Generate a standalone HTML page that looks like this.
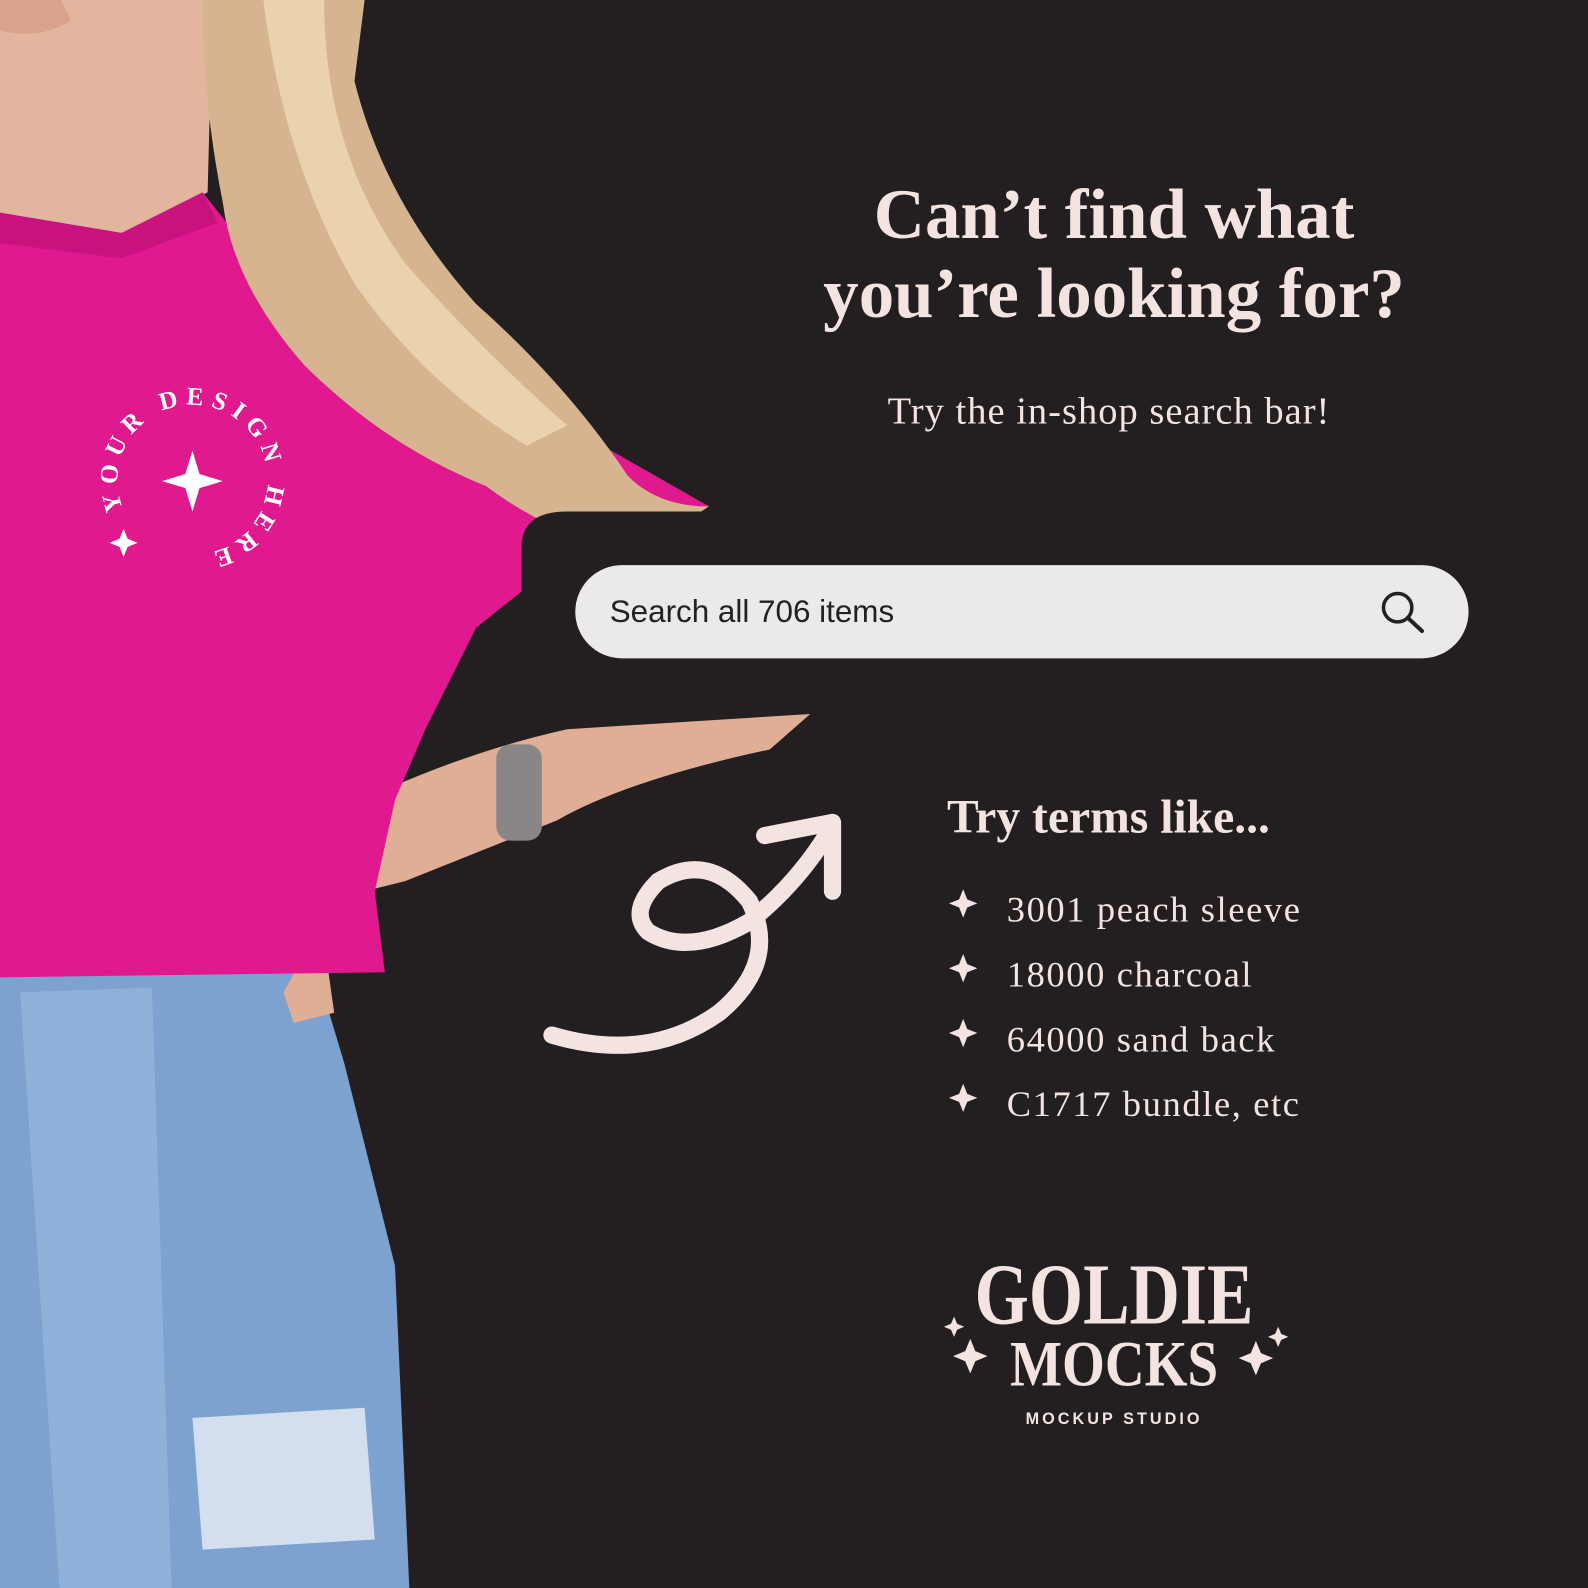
<!DOCTYPE html>
<html><head><meta charset="utf-8"><style>
body{margin:0;width:1588px;height:1588px;overflow:hidden;background:#231f20;position:relative;font-family:"Liberation Serif",serif;color:#f3e4e1}
#w{position:absolute;left:0;top:0;width:1568px;height:1568px;transform:scale(1.0128);transform-origin:0 0}
.t{position:absolute;text-align:center;white-space:nowrap}
</style></head><body><div id="w">
<svg width="1568" height="1568" style="position:absolute;left:0;top:0">
<path d="M0 0H210L205 190L120 230L0 210Z" fill="#e3b49e"/>
<path d="M0 0H60L70 20Q40 40 0 30Z" fill="#d9a28c"/>
<path d="M0 955L310 950L340 1050L390 1250L405 1588H0Z" fill="#7ea2d0"/>
<path d="M20 980L150 975L170 1588H60Z" fill="#9bbbe0" opacity=".6"/>
<path d="M190 1400L360 1390L370 1520L200 1530Z" fill="#e8eef5" opacity=".8"/>
<path d="M380 780Q470 740 560 720L800 705L760 740Q620 770 550 810L400 870L360 880Z" fill="#e0ad95"/>
<path d="M280 980Q300 940 320 930L330 1000L290 1010Z" fill="#e0ad95"/>
<path d="M0 210L120 230L200 190L280 290L560 420L700 500L520 580L470 620L420 720L390 790L370 880L380 960L0 965Z" fill="#e0198f"/>
<path d="M0 210L120 230L200 190L215 220L120 255L0 240Z" fill="#c8137e"/>
<path d="M200 0H360L350 80Q380 200 470 300Q560 380 620 470Q650 500 700 500L640 540Q560 540 480 480Q380 440 300 360Q230 280 220 200Q200 100 200 0Z" fill="#d6b48f"/>
<path d="M260 0H320Q320 150 400 260Q480 350 560 420L520 440Q420 380 350 280Q280 160 260 0Z" fill="#ead2ae"/>
<rect x="490" y="735" width="45" height="95" rx="14" fill="#8a8688"/>
<path d="M515 540Q515 505 560 505H1588V700H600Q515 700 515 650Z" fill="#231f20"/>
<rect x="568" y="558" width="882" height="92" rx="46" fill="#ebe9ea"/>
<circle cx="1380" cy="600" r="14" fill="none" stroke="#222" stroke-width="3.5"/>
<line x1="1390" y1="610" x2="1404" y2="623" stroke="#222" stroke-width="4" stroke-linecap="round"/>
<path d="M545 1022Q640 1050 710 1000Q770 950 740 890Q700 840 650 870Q620 900 640 920Q680 945 740 910Q790 870 822 815" fill="none" stroke="#f3e4e1" stroke-width="17" stroke-linecap="round"/>
<path d="M755 825L822 812L822 880" fill="none" stroke="#f3e4e1" stroke-width="17" stroke-linecap="round" stroke-linejoin="round"/>
<path d="M190 445L197 468L220 475L197 482L190 505L183 482L160 475L183 468Z" fill="#fff"/>
<path d="M122 522L126 532L136 536L126 540L122 550L118 540L108 536L118 532Z" fill="#fff"/>
<defs><path id="c" d="M122 503A74 74 0 1 1 258 503A74 74 0 0 1 122 503"/></defs>
<text font-family="Liberation Serif" font-weight="bold" font-size="25" fill="#fff" letter-spacing="7"><textPath href="#c">YOUR DESIGN HERE</textPath></text>
<g fill="#f3e4e1">
<path d="M951 878l4 10l10 4l-10 4l-4 10l-4-10l-10-4l10-4z"/>
<path d="M951 942l4 10l10 4l-10 4l-4 10l-4-10l-10-4l10-4z"/>
<path d="M951 1006l4 10l10 4l-10 4l-4 10l-4-10l-10-4l10-4z"/>
<path d="M951 1070l4 10l10 4l-10 4l-4 10l-4-10l-10-4l10-4z"/>
<path d="M958 1322l5 12l12 5l-12 5l-5 12l-5-12l-12-5l12-5z"/>
<path d="M1240 1324l5 12l12 5l-12 5l-5 12l-5-12l-12-5l12-5z"/>
<path d="M942 1300l3 7l7 3l-7 3l-3 7l-3-7l-7-3l7-3z"/>
<path d="M1262 1310l3 7l7 3l-7 3l-3 7l-3-7l-7-3l7-3z"/>
</g>
</svg>
<div class="t" style="left:700px;width:800px;top:174px;font-size:70px;font-weight:bold;line-height:78px">Can’t find what<br>you’re looking for?</div>
<div class="t" style="left:700px;width:790px;top:384px;font-size:38px;letter-spacing:1px">Try the in-shop search bar!</div>
<div style="position:absolute;left:602px;top:586px;font-family:'Liberation Sans',sans-serif;font-size:31px;color:#222">Search all 706 items</div>
<div style="position:absolute;left:935px;top:780px;font-size:47px;font-weight:bold">Try terms like...</div>
<div style="position:absolute;left:994px;top:866px;font-size:36px;line-height:64px;letter-spacing:1.6px">3001 peach sleeve<br>18000 charcoal<br>64000 sand back<br>C1717 bundle, etc</div>
<div class="t" style="left:900px;width:400px;top:1240px;font-size:86px;font-weight:bold;line-height:76px;transform:scaleX(.8)">GOLDIE</div>
<div class="t" style="left:900px;width:400px;top:1310px;font-size:64px;font-weight:bold;transform:scaleX(.85)">MOCKS</div>
<div class="t" style="left:900px;width:400px;top:1393px;font-family:'Liberation Sans',sans-serif;font-size:16px;font-weight:bold;letter-spacing:3px">MOCKUP STUDIO</div>
</div></body></html>
